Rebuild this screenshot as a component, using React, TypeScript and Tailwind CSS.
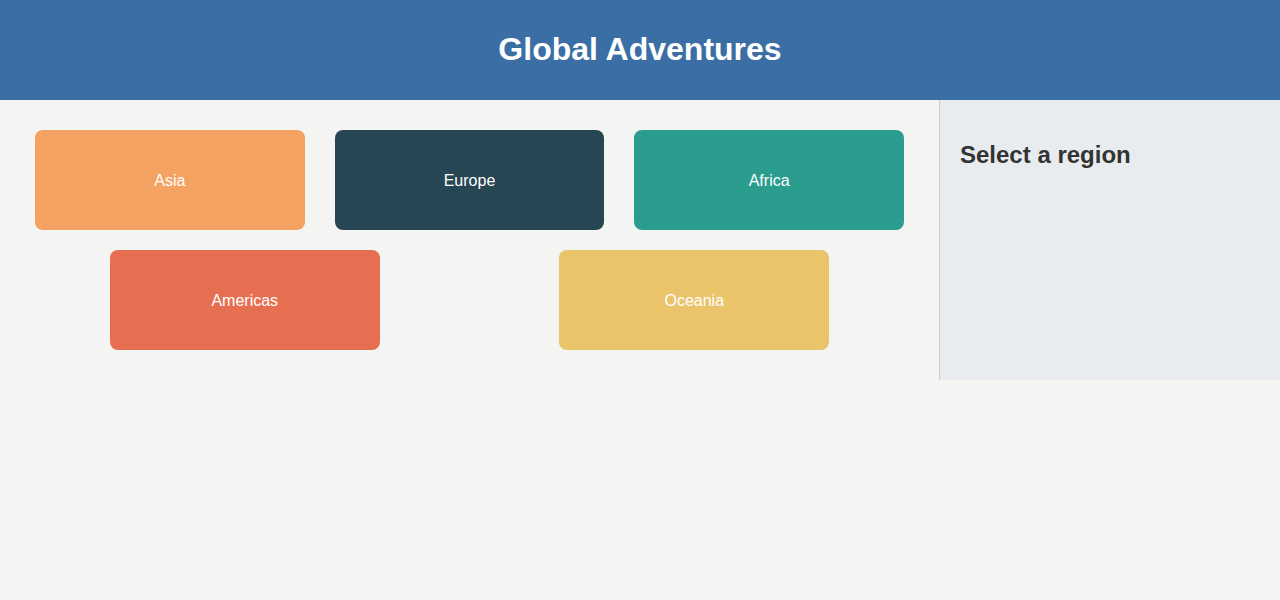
import React from "react";

const regions = [
  { name: "Asia", color: "bg-[#f4a261]" },
  { name: "Europe", color: "bg-[#264653]" },
  { name: "Africa", color: "bg-[#2a9d8f]" },
  { name: "Americas", color: "bg-[#e76f51]" },
  { name: "Oceania", color: "bg-[#e9c46a]" },
];

export default function App() {
  return (
    <div className="min-h-[600px] bg-[#f4f4f2] font-['Liberation_Sans',Arial,sans-serif]">
      <header className="h-[100px] bg-[#3a6ea5] flex items-center justify-center">
        <h1 className="text-[32px] font-bold text-white leading-[1.2] mb-[2px]">Global Adventures</h1>
      </header>
      <div className="flex">
        <main className="flex-1 p-5 flex flex-wrap justify-around">
          {regions.map((r) => (
            <button
              key={r.name}
              className={`${r.color} w-[calc(33.333%-30px)] h-[100px] mx-[15px] my-[10px] pt-[2px] rounded-lg flex items-center justify-center text-white text-base`}
            >
              {r.name}
            </button>
          ))}
        </main>
        <aside className="w-[341px] bg-[#e8ecef] border-l border-[#cccccc] p-5">
          <h2 className="mt-[21px] text-2xl font-bold text-[#333333] leading-[1.2]">Select a region</h2>
        </aside>
      </div>
    </div>
  );
}
